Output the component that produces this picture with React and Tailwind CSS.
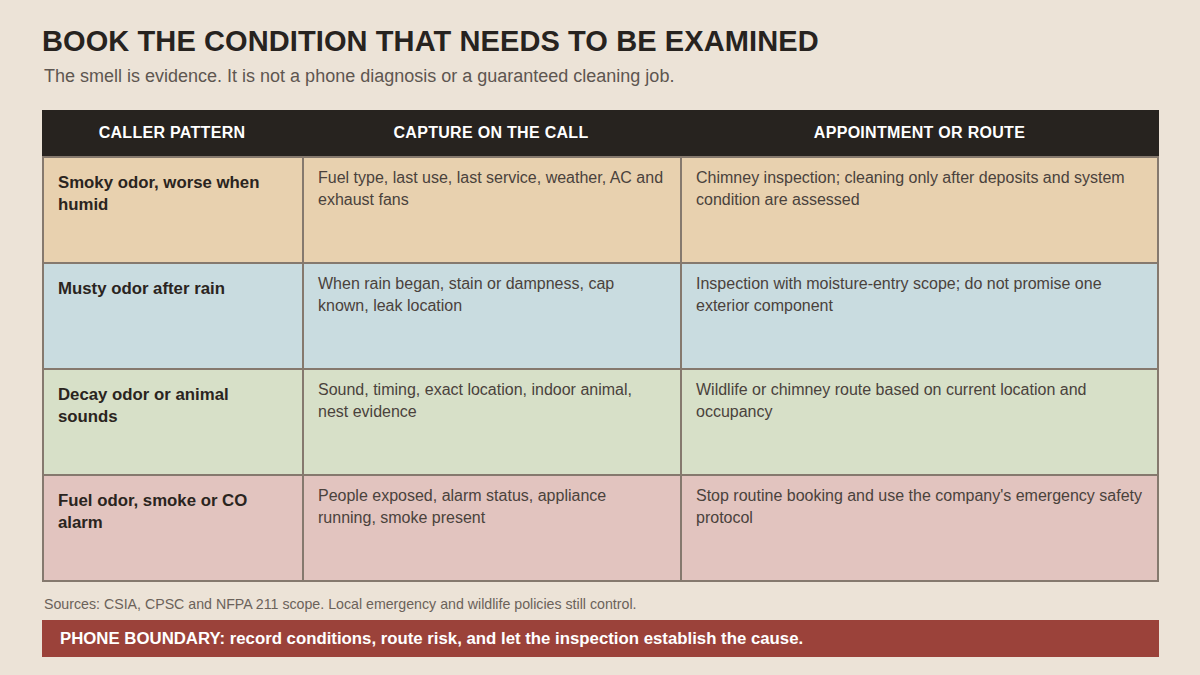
import React from "react";

const rows = [
  {
    pattern: "Smoky odor, worse when humid",
    capture: "Fuel type, last use, last service, weather, AC and exhaust fans",
    route: "Chimney inspection; cleaning only after deposits and system condition are assessed",
    bg: "bg-[#e8d1af]",
  },
  {
    pattern: "Musty odor after rain",
    capture: "When rain began, stain or dampness, cap known, leak location",
    route: "Inspection with moisture-entry scope; do not promise one exterior component",
    bg: "bg-[#c9dce0]",
  },
  {
    pattern: "Decay odor or animal sounds",
    capture: "Sound, timing, exact location, indoor animal, nest evidence",
    route: "Wildlife or chimney route based on current location and occupancy",
    bg: "bg-[#d7e0c8]",
  },
  {
    pattern: "Fuel odor, smoke or CO alarm",
    capture: "People exposed, alarm status, appliance running, smoke present",
    route: "Stop routine booking and use the company's emergency safety protocol",
    bg: "bg-[#e2c4bf]",
  },
];

const cols = "grid grid-cols-[260px_378px_479px]";

export default function App() {
  return (
    <div className="w-[1200px] h-[675px] bg-[#ece3d7] px-[42px] pt-[24px] font-['Liberation_Sans',Arial,sans-serif] overflow-hidden">
      <h1 className="text-[29px] tracking-[0.1px] leading-[34px] font-bold text-[#27231f]">
        BOOK THE CONDITION THAT NEEDS TO BE EXAMINED
      </h1>
      <p className="mt-[8px] ml-[2px] text-[18px] leading-[20px] text-[#5e5650]">
        The smell is evidence. It is not a phone diagnosis or a guaranteed cleaning job.
      </p>

      <div className="mt-[24px] w-[1117px]">
        <div className={`${cols} h-[46px] bg-[#27231f] text-white text-[16px] tracking-[0.3px] font-bold items-center text-center`}>
          <div>CALLER PATTERN</div>
          <div>CAPTURE ON THE CALL</div>
          <div>APPOINTMENT OR ROUTE</div>
        </div>
        <div className="border-b-2 border-[#85796e]">
          {rows.map((r) => (
            <div
              key={r.pattern}
              className={`${cols} h-[106px] border-t-2 border-x-2 border-[#85796e] ${r.bg} text-[16px] leading-[22px]`}
            >
              <div className="border-r-2 border-[#85796e] pl-[14px] pr-[14px] pt-[14px] text-[16.8px] font-bold text-[#2a2420]">
                {r.pattern}
              </div>
              <div className="border-r-2 border-[#85796e] pl-[14px] pr-[14px] pt-[9px] text-[#4a423c]">
                {r.capture}
              </div>
              <div className="pl-[14px] pr-[14px] pt-[9px] text-[#4a423c]">{r.route}</div>
            </div>
          ))}
        </div>
      </div>

      <p className="mt-[14px] ml-[2px] text-[14.2px] leading-[16px] text-[#6b625a]">
        Sources: CSIA, CPSC and NFPA 211 scope. Local emergency and wildlife policies still control.
      </p>

      <div className="mt-[8px] w-[1117px] h-[37px] bg-[#9b423a] flex items-center px-[18px] text-white text-[16.8px] font-bold">
        PHONE BOUNDARY: record conditions, route risk, and let the inspection establish the cause.
      </div>
    </div>
  );
}
